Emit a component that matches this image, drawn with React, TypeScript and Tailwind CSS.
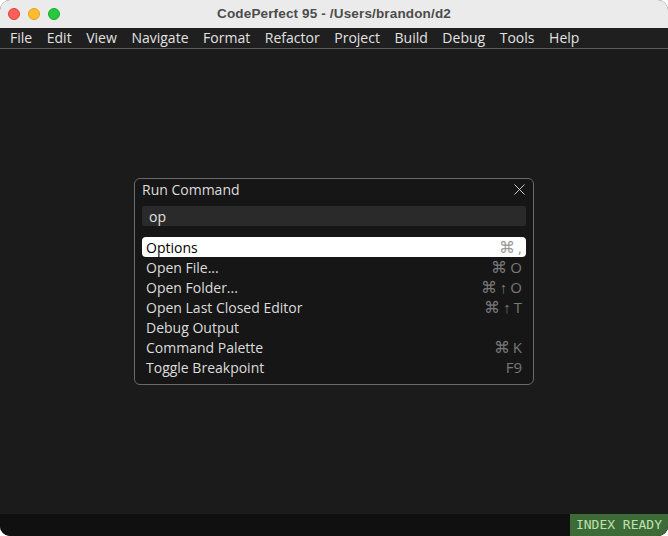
import { X } from 'lucide-react';

const menus = ['File', 'Edit', 'View', 'Navigate', 'Format', 'Refactor', 'Project', 'Build', 'Debug', 'Tools', 'Help'];

const commands = [
  { name: 'Options', keys: ['⌘', ','] },
  { name: 'Open File...', keys: ['⌘', 'O'] },
  { name: 'Open Folder...', keys: ['⌘', '↑', 'O'] },
  { name: 'Open Last Closed Editor', keys: ['⌘', '↑', 'T'] },
  { name: 'Debug Output', keys: [] },
  { name: 'Command Palette', keys: ['⌘', 'K'] },
  { name: 'Toggle Breakpoint', keys: ['F9'] },
];

export default function App() {
  return (
    <div className="w-[668px] h-[536px] bg-white">
      <div className="w-full h-full flex flex-col rounded-[10px] overflow-hidden bg-[#1b1b1b] font-['Open_Sans',sans-serif]">
        {/* Title bar */}
        <div className="relative h-[28px] shrink-0 bg-[#ebebeb] flex items-center justify-center">
          <div className="absolute left-[8px] top-[8px] flex gap-[8px]">
            <span className="w-[12px] h-[12px] rounded-full bg-[#fe5f57] border border-[#e0443e]" />
            <span className="w-[12px] h-[12px] rounded-full bg-[#febc2e] border border-[#dea123]" />
            <span className="w-[12px] h-[12px] rounded-full bg-[#28c840] border border-[#1aab29]" />
          </div>
          <span className="text-[13.5px] font-bold text-[#4c4c4c] font-['Liberation_Sans',sans-serif] tracking-[0.15px]">
            CodePerfect 95 - /Users/brandon/d2
          </span>
        </div>

        {/* Menu bar */}
        <div className="h-[21px] shrink-0 bg-[#1f1f1f] border-b border-[#5a5a5a] flex items-center pl-[10px] gap-[14.6px] text-[14px] text-[#e2e2e2]">
          {menus.map((m) => (
            <span key={m} className="leading-[20px]">{m}</span>
          ))}
        </div>

        {/* Editor area */}
        <div className="flex-1 bg-[#1b1b1b] pt-[129px]">
          <div className="ml-[134px] w-[400px] rounded-[6px] border border-[#6a6a6a] bg-[#161616] px-[7px] pb-[7px]">
            <div className="h-[20px] flex items-center justify-between text-[14px] text-[#dcdcdc]">
              <span>Run Command</span>
              <X className="w-[19px] h-[19px] -mr-[3px] text-[#e6e6e6]" strokeWidth={1.1} />
            </div>
            <div className="mt-[7px] h-[20px] bg-[#2a2a2a] rounded-[2px] flex items-center px-[7px] text-[14px] text-[#e0e0e0]">
              op
            </div>
            <div className="mt-[11px] flex flex-col">
              {commands.map((c, i) => (
                <div
                  key={c.name}
                  className={
                    i === 0
                      ? 'h-[20px] flex items-center justify-between px-[4px] bg-white rounded-[4px] text-[14px] text-black'
                      : 'h-[20px] flex items-center justify-between px-[4px] text-[14px] text-[#dcdcdc]'
                  }
                >
                  <span>{c.name}</span>
                  <span className={i === 0 ? 'flex items-center gap-[3px] text-[#9a9a9a] text-[15px]' : 'flex items-center gap-[3px] text-[#787878] text-[15px]'}>
                    {c.keys.map((k, j) => (
                      <span key={j} className={k === '⌘' ? 'text-[16px] leading-[20px]' : 'leading-[20px]'}>
                        {k}
                      </span>
                    ))}
                  </span>
                </div>
              ))}
            </div>
          </div>
        </div>

        {/* Status bar */}
        <div className="h-[22px] shrink-0 bg-[#101010] flex justify-end">
          <div className="h-full px-[6px] bg-[#3d6b37] flex items-center text-[13px] text-[#bfe0b0] font-['DejaVu_Sans_Mono',monospace]">
            INDEX READY
          </div>
        </div>
      </div>
    </div>
  );
}
